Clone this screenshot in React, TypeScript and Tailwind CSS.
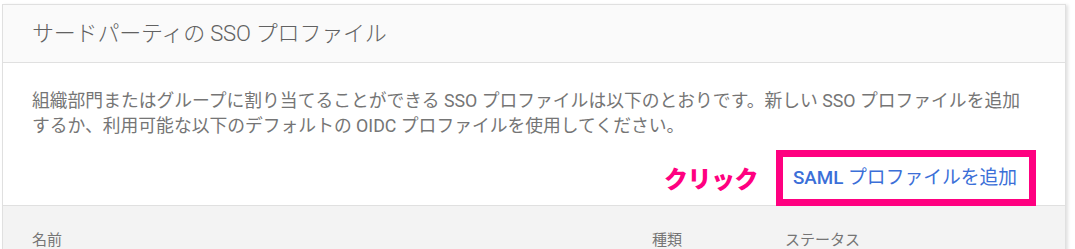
import React from "react";

export default function App() {
  const font = {
    fontFamily: 'Roboto, "Noto Sans CJK JP", sans-serif',
  };
  return (
    <div
      className="w-[1075px] h-[249px] bg-white overflow-hidden"
      style={font}
    >
      <div className="ml-[2px] mt-[4px] w-[1064px] border border-[#e0e0e0] shadow-[2px_1px_3px_rgba(0,0,0,0.12)] bg-white">
        <div className="h-[58px] bg-[#fafafa] border-b border-[#e0e0e0] flex items-center pl-[29px]">
          <span className="text-[22px] text-[#616161] font-light tracking-[-0.2px]">
            サードパーティの SSO プロファイル
          </span>
        </div>
        <div className="pt-[25px] px-[29px] text-[17.8px] leading-[25px] text-[#757575] whitespace-nowrap">
          <p>
            組織部門またはグループに割り当てることができる SSO
            プロファイルは以下のとおりです。新しい SSO プロファイルを追加
            <br />
            するか、利用可能な以下のデフォルトの OIDC プロファイルを使用してください。
          </p>
        </div>
        <div className="flex justify-end items-center pr-[29px] mt-[12px]">
          <span
            className="text-[24px] font-black text-[#ff0080] mr-[18px] tracking-[-0.5px]"
            style={{ fontFamily: '"Noto Sans CJK JP", sans-serif' }}
          >
            クリック
          </span>
          <div className="border-[7px] border-[#ff0080] h-[56px] w-[260px] pl-[10px] flex items-center whitespace-nowrap">
            <span className="text-[18.8px] text-[#3b6fd8]">
              <span className="font-medium">SAML</span> プロファイルを追加
            </span>
          </div>
        </div>
        <div className="bg-[#f3f3f3] border-t border-[#e0e0e0] -mt-[1px] h-[60px] flex items-start pt-[24px] text-[15px] leading-[20px] text-[#757575]">
          <div className="w-[649px] pl-[29px]">名前</div>
          <div className="w-[133px]">種類</div>
          <div>ステータス</div>
        </div>
      </div>
    </div>
  );
}
